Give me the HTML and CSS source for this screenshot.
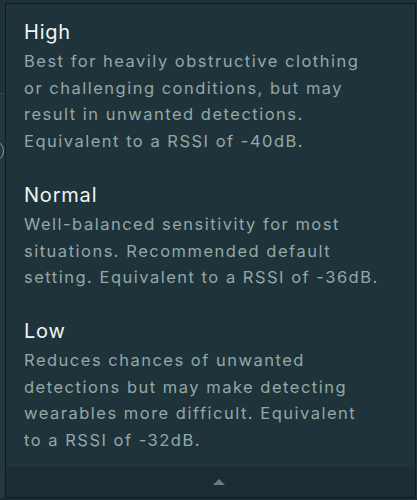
FILE: index.html
```html
<!DOCTYPE html>
<html>
<head>
<meta charset="utf-8">
<link rel="stylesheet" href="styles.css">
</head>
<body>
<div class="backdrop">
  <div class="bg-row"></div>
  <div class="bg-knob"></div>
</div>
<div class="popover">
  <div class="options">
    <div class="option">
      <div class="title">High</div>
      <div class="desc">Best for heavily obstructive clothing or challenging conditions, but may result in unwanted detections. Equivalent to a RSSI of -40dB.</div>
    </div>
    <div class="option">
      <div class="title">Normal</div>
      <div class="desc">Well-balanced sensitivity for most situations. Recommended default setting. Equivalent to a RSSI of -36dB.</div>
    </div>
    <div class="option">
      <div class="title">Low</div>
      <div class="desc">Reduces chances of unwanted detections but may make detecting wearables more difficult. Equivalent to&nbsp;a RSSI of -32dB.</div>
    </div>
  </div>
  <div class="footer"><span class="caret"></span></div>
</div>
</body>
</html>
```

FILE: styles.css
```css
html, body {
  margin: 0;
  padding: 0;
  width: 417px;
  height: 500px;
  overflow: hidden;
  background: #1a2a30;
  font-family: "Inter", "Lato", sans-serif;
}
.backdrop {
  height: 498px;
  background: #24373d;
  position: relative;
}
.bg-row {
  height: 93px;
  background: #1f3036;
  border-bottom: 1px solid #31464c;
}
.bg-knob {
  position: absolute;
  left: -18px;
  top: 140px;
  width: 20px;
  height: 20px;
  border: 1px solid #8a9a9c;
  border-radius: 50%;
}
.popover {
  position: absolute;
  left: 5px;
  top: 3px;
  width: 409px;
  height: 493px;
  border: 1px solid #0f1b1f;
  background: #1f333a;
  display: flex;
  flex-direction: column;
}
.options {
  flex: 1;
  padding: 14px 33px 0 18px;
  display: flex;
  flex-direction: column;
  gap: 26px;
}
.title {
  color: #f0f4f4;
  font-size: 20px;
  font-weight: 400;
  line-height: 28px;
  letter-spacing: 0.8px;
}
.desc {
  margin-top: 2px;
  color: #93a8a8;
  font-size: 16.5px;
  line-height: 26.7px;
  letter-spacing: 1.5px;
}
.footer {
  height: 30px;
  background: #1b2c32;
  display: flex;
  align-items: center;
  justify-content: center;
  padding-left: 16px;
}
.caret {
  width: 0;
  height: 0;
  border-left: 6px solid transparent;
  border-right: 6px solid transparent;
  border-bottom: 6px solid #6c7b80;
}
```
